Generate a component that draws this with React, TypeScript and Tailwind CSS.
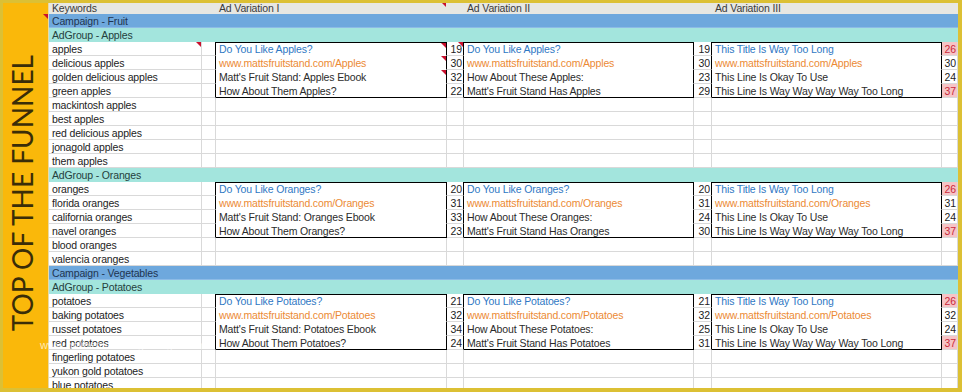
import React from "react";
import clsx from "clsx";

type Ad = { text: string; n: number; bad?: boolean };
type Row =
  | { t: "campaign"; label: string }
  | { t: "adgroup"; label: string }
  | { t: "kw"; kw: string; box?: number; ads?: Ad[]; kwTri?: boolean; adTri?: boolean; cntTri?: boolean };

const BLUE = "text-[#2f78c4]";
const ORANGE = "text-[#ec8a34]";

function makeAds(name: string, nums: number[][]): Ad[][] {
  const url = `www.mattsfruitstand.com/${name}`;
  const cols = [
    [`Do You Like ${name}?`, url, `Matt's Fruit Stand: ${name} Ebook`, `How About Them ${name}?`],
    [`Do You Like ${name}?`, url, `How About These ${name}:`, `Matt's Fruit Stand Has ${name}`],
    ["This Title Is Way Too Long", url, "This Line Is Okay To Use", "This Line Is Way Way Way Way Too Long"],
  ];
  return [0, 1, 2, 3].map((r) =>
    [0, 1, 2].map((c) => ({ text: cols[c][r], n: nums[c][r], bad: nums[c][r] > 25 && c === 2 && r !== 1 }))
  );
}

function group(label: string, kws: string[], name: string, nums: number[][], first = false): Row[] {
  const ads = makeAds(name, nums);
  const rows: Row[] = [{ t: "adgroup", label }];
  kws.forEach((kw, i) => {
    rows.push({
      t: "kw",
      kw,
      box: i < 4 ? i : undefined,
      ads: i < 4 ? ads[i] : undefined,
      kwTri: first && i === 0,
      adTri: first && i < 3,
      cntTri: first && i === 0,
    });
  });
  return rows;
}

const rows: Row[] = [
  { t: "campaign", label: "Campaign - Fruit" },
  ...group(
    "AdGroup - Apples",
    ["apples", "delicious apples", "golden delicious apples", "green apples", "mackintosh apples", "best apples", "red delicious apples", "jonagold apples", "them apples"],
    "Apples",
    [
      [19, 30, 32, 22],
      [19, 30, 23, 29],
      [26, 30, 24, 37],
    ],
    true
  ),
  ...group(
    "AdGroup - Oranges",
    ["oranges", "florida oranges", "california oranges", "navel oranges", "blood oranges", "valencia oranges"],
    "Oranges",
    [
      [20, 31, 33, 23],
      [20, 31, 24, 30],
      [26, 31, 24, 37],
    ]
  ),
  { t: "campaign", label: "Campaign - Vegetables" },
  ...group(
    "AdGroup - Potatoes",
    ["potatoes", "baking potatoes", "russet potatoes", "red potatoes", "fingerling potatoes", "yukon gold potatoes", "blue potatoes"],
    "Potatoes",
    [
      [21, 32, 34, 24],
      [21, 32, 25, 31],
      [26, 32, 24, 37],
    ]
  ),
];

const GRID = "[grid-template-columns:153px_14px_231px_17px_230px_18px_230px_16px]";

function Tri() {
  return (
    <span className="absolute top-0 right-0 w-0 h-0 border-t-[5px] border-t-[#c8102e] border-l-[5px] border-l-transparent" />
  );
}

function adColor(i: number) {
  if (i === 0) return BLUE;
  if (i === 1) return ORANGE;
  return "text-[#2b2b2b]";
}

function KwRow({ r }: { r: Extract<Row, { t: "kw" }> }) {
  const inBox = r.box !== undefined;
  const b = r.box ?? -1;
  const cellBase = "relative h-[14px] overflow-hidden whitespace-nowrap border-b border-r border-[#d9d9d9] leading-[15px]";
  const adCell = (k: number) => {
    const ad = r.ads ? r.ads[k] : undefined;
    return (
      <div
        key={"a" + k}
        className={clsx(
          "relative h-[14px] overflow-hidden whitespace-nowrap pl-[3px] border-r border-b",
          inBox ? "border-r-black" : "border-r-[#d9d9d9]",
          inBox ? (b === 3 ? "border-b-black" : "border-b-white") : "border-b-[#d9d9d9]",
          inBox && b === 0 ? "border-t border-t-black leading-[13px]" : "leading-[15px]",
          inBox && adColor(b)
        )}
      >
        {ad?.text}
        {k === 0 && r.adTri && <Tri />}
      </div>
    );
  };
  const cntCell = (k: number) => {
    const ad = r.ads ? r.ads[k] : undefined;
    return (
      <div
        key={"c" + k}
        className={clsx(
          "relative h-[14px] overflow-hidden whitespace-nowrap text-right pr-[1px] leading-[15px] border-b border-b-[#d9d9d9] border-r",
          inBox && k < 2 ? "border-r-black" : "border-r-[#d9d9d9]",
          ad?.bad ? "bg-[#f6c4c6] text-[#c9283a]" : "text-[#222]"
        )}
      >
        {ad?.n}
        {k === 0 && r.cntTri && <Tri />}
      </div>
    );
  };
  return (
    <div className={clsx("grid", GRID)}>
      <div className={clsx(cellBase, "pl-[3px] text-[#222]")}>
        {r.kw}
        {r.kwTri && <Tri />}
      </div>
      <div className={clsx(cellBase, inBox && "border-r-black")} />
      {adCell(0)}
      {cntCell(0)}
      {adCell(1)}
      {cntCell(1)}
      {adCell(2)}
      {cntCell(2)}
    </div>
  );
}

export default function App() {
  return (
    <div className="relative w-[962px] h-[392px] bg-[#dcc034] pt-[3px] pl-[3px] pr-[4px] pb-[4px] flex font-['Liberation_Sans',Arial,sans-serif] text-[10.5px] tracking-[-0.15px] overflow-hidden">
      {/* left panel */}
      <div className="relative w-[46px] h-full bg-[#fab80a] border-r border-[#e8d9a8] flex items-center justify-center pr-[7px] pb-[4px]">
        <span className="[writing-mode:vertical-rl] rotate-180 font-['Lato','Liberation_Sans',sans-serif] font-normal text-[28px] leading-none tracking-normal text-[#3a2d08] whitespace-nowrap">
          TOP OF THE FUNNEL
        </span>
        <span className="absolute top-[11px] right-0 w-0 h-0 border-t-[5px] border-t-[#c8102e] border-l-[5px] border-l-transparent" />
      </div>
      {/* sheet */}
      <div className="flex-1 h-full overflow-hidden bg-white flex flex-col">
        <div className={clsx("grid h-[11px] bg-[#e7e7e2] text-[#3a3a3a] leading-[11px] shrink-0", GRID)}>
          <div className="pl-[3px] overflow-hidden whitespace-nowrap">Keywords</div>
          <div />
          <div className="relative pl-[3px] overflow-hidden whitespace-nowrap">
            Ad Variation I
            <span className="absolute top-0 right-[1px] w-0 h-0 border-t-[4px] border-t-[#c8102e] border-l-[4px] border-l-transparent" />
          </div>
          <div />
          <div className="pl-[3px] overflow-hidden whitespace-nowrap">Ad Variation II</div>
          <div />
          <div className="pl-[3px] overflow-hidden whitespace-nowrap">Ad Variation III</div>
          <div />
        </div>
        {rows.map((r, i) => {
          if (r.t === "campaign")
            return (
              <div key={i} className="h-[14px] shrink-0 bg-[#6ea8dd] pl-[3px] leading-[15px] text-[#1e3450] border-b border-[#8dbbe6]">
                {r.label}
              </div>
            );
          if (r.t === "adgroup")
            return (
              <div key={i} className="h-[14px] shrink-0 bg-[#a3e5dd] pl-[3px] leading-[15px] text-[#24403c]">
                {r.label}
              </div>
            );
          return (
            <div key={i} className="shrink-0">
              <KwRow r={r} />
            </div>
          );
        })}
      </div>
      {/* watermark */}
      <span className="absolute left-[40px] top-[337px] text-[11px] text-white/70 whitespace-nowrap tracking-normal">
        www.onlinemarketingcollege.com
      </span>
    </div>
  );
}
